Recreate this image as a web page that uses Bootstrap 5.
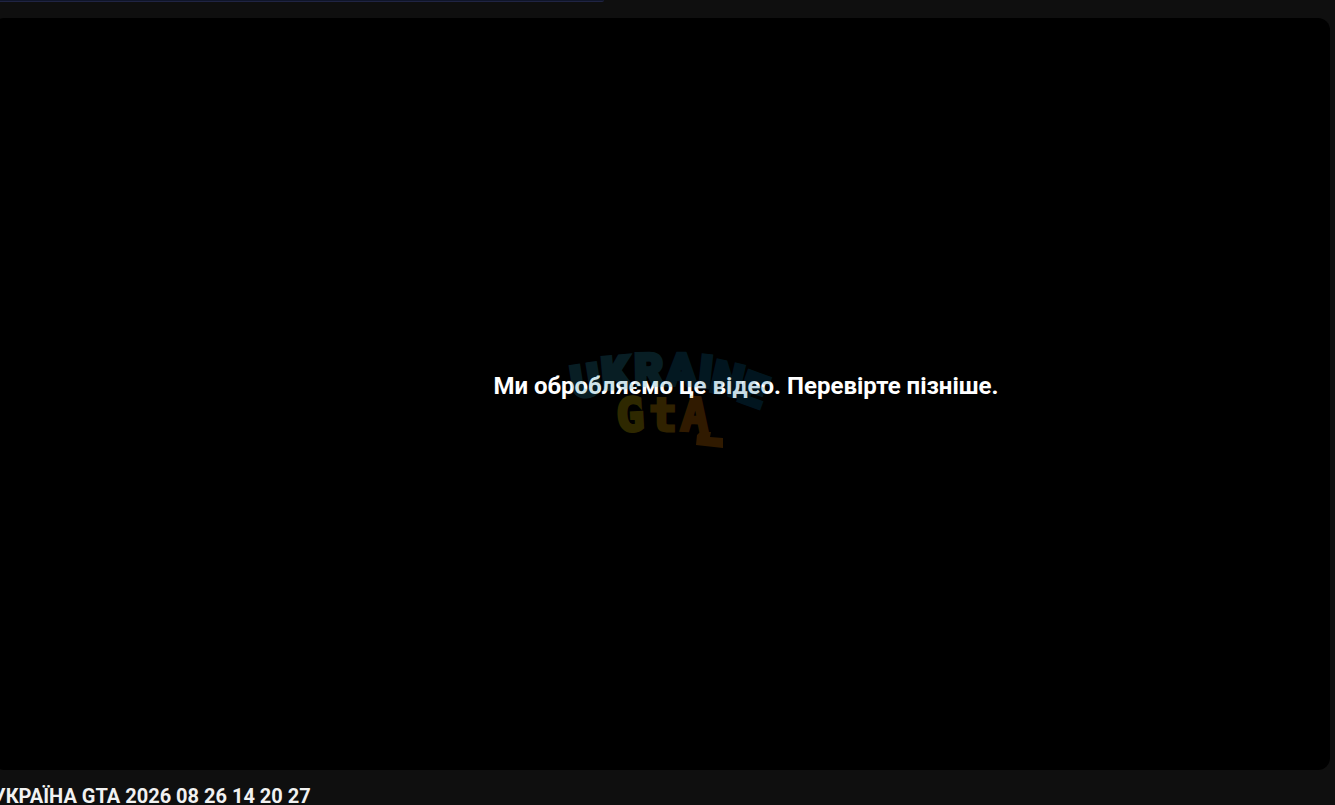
<!DOCTYPE html>
<html lang="uk">
<head>
<meta charset="utf-8">
<meta name="viewport" content="width=device-width, initial-scale=1">
<title>УКРАЇНА GTA</title>
<link href="https://cdn.jsdelivr.net/npm/bootstrap@5.3.0/dist/css/bootstrap.min.css" rel="stylesheet">
<style>
body { background: #0f0f0f; color: #f1f1f1; font-family: Roboto, sans-serif; }
.page { min-height: 100vh; padding-right: 5px; }
.topline { width: 46%; height: 2px; margin-left: -8px; background: #10162a; border-bottom: 1px solid #202443; border-radius: 0 0 8px 0; }
.player { height: calc(100vh - 53px); min-height: 240px; margin: 16px 0 0 -8px; border-radius: 12px; background: #000; }
.message { font-size: 24px; line-height: 32px; font-weight: 700; color: #fff; padding-left: 170px; padding-bottom: 16px; }
.watermark { width: 208px; height: 104px; opacity: .22; overflow: visible; pointer-events: none; }
.watermark text { font-family: Roboto, sans-serif; font-weight: 900; font-size: 44px; stroke-width: 4px; stroke-linejoin: miter; text-anchor: middle; }
.watermark .lower { font-family: "DejaVu Sans Mono", monospace; font-weight: 700; font-size: 46px; stroke-width: 3px; }
.title { font-size: 20px; line-height: 28px; font-weight: 700; margin: 12px 0 0 -7px; }
</style>
<script src="https://cdn.jsdelivr.net/npm/bootstrap@5.3.0/dist/js/bootstrap.bundle.min.js" defer></script>
</head>
<body class="overflow-hidden">
<main class="page">
  <div class="topline"></div>
  <section class="player position-relative d-flex align-items-center justify-content-center">
    <p class="message m-0 text-center">Ми обробляємо це відео. Перевірте пізніше.</p>
    <svg class="watermark position-absolute top-50 start-50 translate-middle ms-2 mt-1" viewBox="0 0 208 104" role="img" aria-label="Ukraine GTA">
      <g fill="#2589a5" stroke="#2589a5">
        <text transform="translate(23 50) rotate(-9)">U</text>
        <text transform="translate(52 42) rotate(-5)">K</text>
        <text transform="translate(84 39) rotate(-1)">R</text>
      </g>
      <g fill="#116f98" stroke="#116f98">
        <text transform="translate(116 39) rotate(1)">A</text>
        <text transform="translate(139 41) rotate(6)">I</text>
      </g>
      <g fill="#07628f" stroke="#07628f">
        <text transform="translate(159 48) rotate(13)">N</text>
        <text transform="translate(183 58) rotate(20)">E</text>
      </g>
      <text class="lower" fill="#d2b800" stroke="#d2b800" transform="translate(66 85) rotate(-3)">G</text>
      <text class="lower" fill="#d89a00" stroke="#d89a00" transform="translate(98 85)">t</text>
      <text class="lower" fill="#d87800" stroke="#d87800" transform="translate(129 85) rotate(3)">A</text>
      <path fill="#d87800" d="M135 86h11l-1 5 13 1v10l-27-3 1-10z"/>
    </svg>
  </section>
  <h1 class="title text-nowrap">УКРАЇНА GTA 2026 08 26 14 20 27</h1>
</main>
</body>
</html>
